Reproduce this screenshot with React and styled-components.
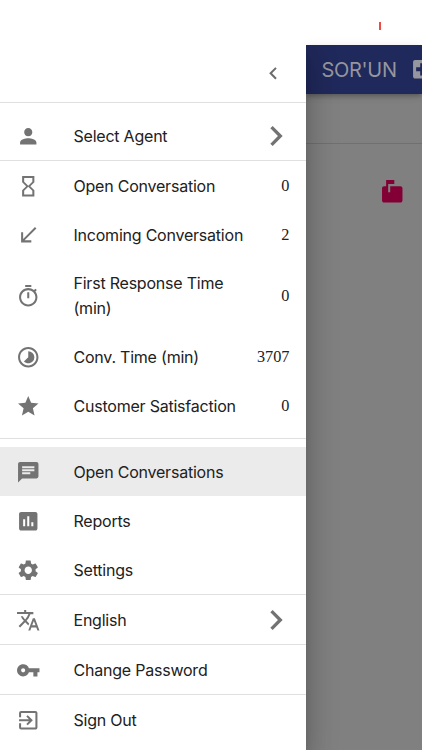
import React from "react";
import styled, { createGlobalStyle } from "styled-components";
import {
  MdPerson, MdHourglassEmpty, MdCallReceived, MdTimelapse, MdStar, MdChat,
  MdSettings, MdTranslate, MdVpnKey, MdExitToApp,
  MdMarkunreadMailbox, MdChevronLeft, MdChevronRight, MdLocalHospital,
} from "react-icons/md";

const GlobalStyle = createGlobalStyle`
  * { box-sizing: border-box; }
  body { margin: 0; background: #fff; overflow: hidden; }
`;

const Screen = styled.div`
  display: flex;
  flex-direction: column;
  width: 422px;
  height: 750px;
  overflow: hidden;
  background: #fff;
  font-family: Inter, "Liberation Sans", sans-serif;
`;

const StatusBar = styled.div`
  flex: none;
  height: 45px;
  padding: 22px 41px 0 0;
  display: flex;
  justify-content: flex-end;
`;

const BatteryMark = styled.span`
  width: 2px;
  height: 7.5px;
  background: #f04a45;
`;

const Body = styled.div`
  flex: 1;
  min-height: 0;
  display: flex;
`;

const Drawer = styled.nav`
  flex: none;
  width: 305.5px;
  background: #fff;
  display: flex;
  flex-direction: column;
  z-index: 1;
  clip-path: inset(0 -60px 0 0);
  box-shadow: 0 8px 10px -5px rgba(0, 0, 0, 0.2), 0 16px 24px 2px rgba(0, 0, 0, 0.14),
    0 6px 30px 5px rgba(0, 0, 0, 0.12);
`;

const DrawerHeader = styled.header`
  flex: none;
  height: 57px;
  padding-right: 20px;
  display: flex;
  align-items: center;
  justify-content: flex-end;
  color: #6c6c6c;
`;

const Section = styled.section`
  flex: none;
  border-top: 1px solid #e0e0e0;
  padding: ${(p) => p.$pad || "0"};
`;

const Row = styled.div`
  display: flex;
  align-items: center;
  height: ${(p) => (p.$tall ? "73.3px" : "49px")};
  padding: 0 16px 0 16.3px;
  background: ${(p) => (p.$selected ? "#ebebeb" : "transparent")};
`;

const IconSlot = styled.span`
  flex: none;
  display: flex;
  width: 57.2px;
  color: #737373;
`;

const Label = styled.span`
  flex: 1;
  padding-right: 24px;
  margin-right: -24px;
  max-width: 204px;
  font-size: 16px;
  line-height: 24.5px;
  letter-spacing: -0.22px;
  color: #212121;
`;

const Value = styled.span`
  margin-left: auto;
  font-family: "Liberation Serif", serif;
  font-size: 16.3px;
  line-height: 24px;
  color: #212121;
`;

const Arrow = styled.span`
  display: flex;
  margin: 0 -6.2px 0 auto;
  color: #737373;
`;

const Page = styled.main`
  flex: 1;
  min-width: 0;
  background: #808080;
`;

const AppBar = styled.div`
  height: 49px;
  padding-left: 16px;
  display: flex;
  align-items: center;
  gap: 13px;
  overflow: hidden;
  white-space: nowrap;
  background: #20295b;
  color: #95969e;
  box-shadow: 0 2px 4px -1px rgba(0, 0, 0, 0.2), 0 4px 5px rgba(0, 0, 0, 0.1),
    0 1px 10px rgba(0, 0, 0, 0.08);
  svg { flex: none; }
`;

const Brand = styled.span`
  font-size: 20px;
  letter-spacing: -0.3px;
`;

const Toolbar = styled.div`
  height: 50px;
  border-bottom: 1px solid #707070;
`;

const MailRow = styled.div`
  display: flex;
  justify-content: flex-end;
  padding: 35.5px 17.5px 0 0;
  color: #820035;
`;

const ICON = 24.5;

const TimerIcon = () => (
  <svg width={ICON} height={ICON} viewBox="0 0 24 24" fill="currentColor">
    <path d="M15 1H9v2h6V1zm-4 13h2V8h-2v6zm8.03-6.61l1.42-1.42c-.43-.51-.9-.99-1.41-1.41l-1.42 1.42C16.07 4.74 14.12 4 12 4c-4.97 0-9 4.03-9 9s4.02 9 9 9 9-4.03 9-9c0-2.12-.74-4.07-1.97-5.61zM12 20c-3.87 0-7-3.13-7-7s3.13-7 7-7 7 3.13 7 7-3.13 7-7 7z" />
  </svg>
);

const ReportIcon = () => (
  <svg width={ICON} height={ICON} viewBox="0 0 24 24" fill="currentColor">
    <path d="M19 3H5c-1.1 0-2 .9-2 2v14c0 1.1.9 2 2 2h14c1.1 0 2-.9 2-2V5c0-1.1-.9-2-2-2zM9 17H7v-7h2v7zm4 0h-2V7h2v10zm4 0h-2v-4h2v4z" />
  </svg>
);

const sections = [
  { pad: "8.3px 0 0", rows: [{ icon: MdPerson, label: "Select Agent", arrow: true }] },
  {
    pad: "0 0 7.9px",
    rows: [
      { icon: MdHourglassEmpty, label: "Open Conversation", value: "0" },
      { icon: MdCallReceived, label: "Incoming Conversation", value: "2" },
      { icon: TimerIcon, label: "First Response Time (min)", value: "0", tall: true },
      { icon: MdTimelapse, label: "Conv. Time (min)", value: "3707" },
      { icon: MdStar, label: "Customer Satisfaction", value: "0" },
    ],
  },
  {
    pad: "8px 0 0",
    rows: [
      { icon: MdChat, label: "Open Conversations", selected: true },
      { icon: ReportIcon, label: "Reports" },
      { icon: MdSettings, label: "Settings" },
    ],
  },
  { rows: [{ icon: MdTranslate, label: "English", arrow: true }] },
  { rows: [{ icon: MdVpnKey, label: "Change Password" }] },
  { rows: [{ icon: MdExitToApp, label: "Sign Out" }] },
];

export default function App() {
  return (
    <Screen>
      <GlobalStyle />
      <StatusBar><BatteryMark /></StatusBar>
      <Body>
        <Drawer>
          <DrawerHeader><MdChevronLeft size={ICON} /></DrawerHeader>
          {sections.map((section, i) => (
            <Section key={i} $pad={section.pad}>
              {section.rows.map(({ icon: Icon, label, value, arrow, tall, selected }) => (
                <Row key={label} $tall={tall} $selected={selected}>
                  <IconSlot><Icon size={ICON} /></IconSlot>
                  <Label>{label}</Label>
                  {value && <Value>{value}</Value>}
                  {arrow && <Arrow><MdChevronRight size={40} /></Arrow>}
                </Row>
              ))}
            </Section>
          ))}
        </Drawer>
        <Page>
          <AppBar>
            <Brand>SOR'UN</Brand>
            <MdLocalHospital size={24.5} />
          </AppBar>
          <Toolbar />
          <MailRow><MdMarkunreadMailbox size={ICON} /></MailRow>
        </Page>
      </Body>
    </Screen>
  );
}
